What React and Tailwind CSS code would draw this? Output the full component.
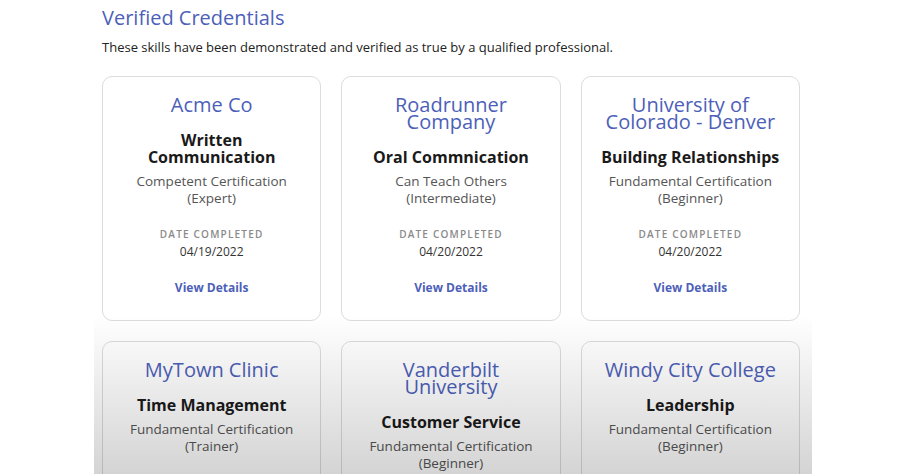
const credentials = [
  {
    org: "Acme Co",
    skill: "Written Communication",
    level: "Competent Certification",
    tier: "(Expert)",
    date: "04/19/2022",
  },
  {
    org: "Roadrunner Company",
    skill: "Oral Commnication",
    level: "Can Teach Others",
    tier: "(Intermediate)",
    date: "04/20/2022",
  },
  {
    org: "University of Colorado - Denver",
    skill: "Building Relationships",
    level: "Fundamental Certification",
    tier: "(Beginner)",
    date: "04/20/2022",
  },
  {
    org: "MyTown Clinic",
    skill: "Time Management",
    level: "Fundamental Certification",
    tier: "(Trainer)",
    date: "04/21/2022",
  },
  {
    org: "Vanderbilt University",
    skill: "Customer Service",
    level: "Fundamental Certification",
    tier: "(Beginner)",
    date: "04/21/2022",
  },
  {
    org: "Windy City College",
    skill: "Leadership",
    level: "Fundamental Certification",
    tier: "(Beginner)",
    date: "04/22/2022",
  },
];

const CredentialCard = ({ item }) => (
  <div className="flex flex-col items-center rounded-[10px] border border-[#dcdcdc] bg-white px-4 pt-[19px] pb-[24px] text-center">
    <h3 className="max-w-[180px] text-[20px] leading-[17px] text-[#4d5fb8]">{item.org}</h3>
    <p className="mt-[19px] text-[16px] font-bold leading-[17px] text-[#1a1a1a]">{item.skill}</p>
    <p className="mt-[7px] text-[13.5px] leading-[16.5px] text-[#555]">
      {item.level}
      <br />
      {item.tier}
    </p>
    <p className="mt-[21px] text-[10px] font-semibold uppercase leading-[14px] tracking-[0.12em] text-[#8a8a8a]">
      Date Completed
    </p>
    <p className="mt-[3px] text-[12px] leading-[16px] text-[#333]">{item.date}</p>
    <a href="#" className="mt-[20px] text-[12px] font-bold leading-[16px] text-[#4d5fb8]">
      View Details
    </a>
  </div>
);

const App = () => {
  return (
    <div className="relative h-screen overflow-hidden bg-white font-['Open_Sans',sans-serif]">
      <div className="ml-[102px] w-[698px] pt-[4px]">
        {/* Header */}
        <h1 className="text-[20px] font-medium leading-[28px] text-[#4d5fb8]">Verified Credentials</h1>
        <p className="mt-[6px] text-[13px] leading-[18px] text-[#222]">
          These skills have been demonstrated and verified as true by a qualified professional.
        </p>

        {/* Cards */}
        <div className="mt-[20px] grid grid-cols-3 gap-x-[20px] gap-y-[20px]">
          {credentials.map((item) => (
            <CredentialCard key={item.org} item={item} />
          ))}
        </div>
      </div>

      {/* Fade overlay */}
      <div className="pointer-events-none absolute top-[315px] left-[94px] bottom-0 w-[718px] bg-gradient-to-b from-black/0 to-black/[0.17]" />
    </div>
  );
};

export default App;
